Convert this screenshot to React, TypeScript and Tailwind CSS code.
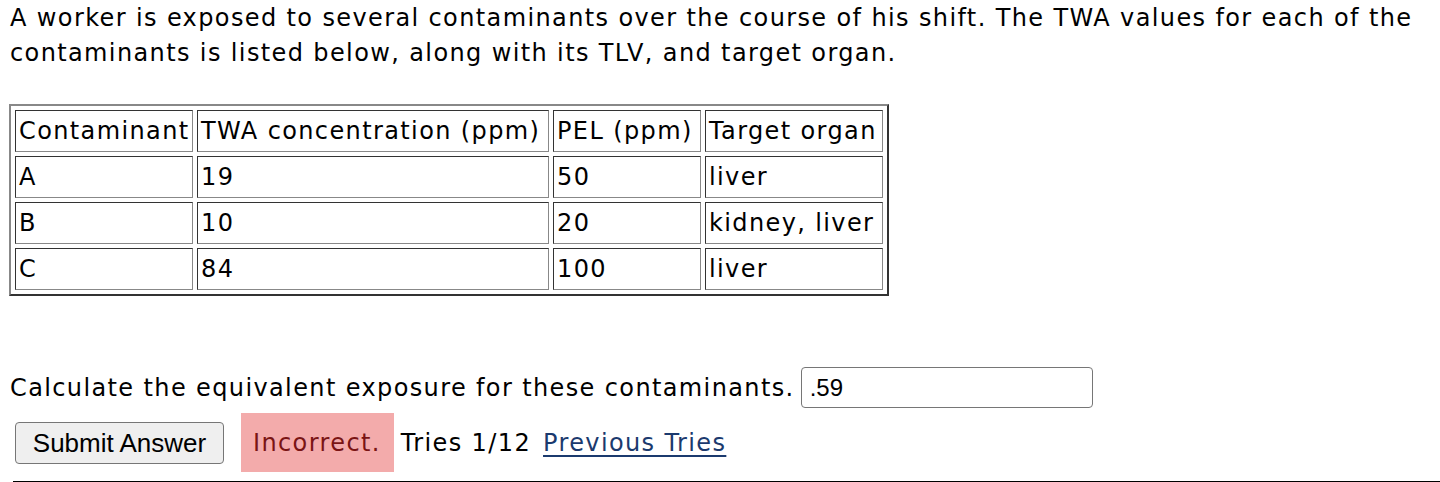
const rows = [
  { name: 'A', twa: '19', pel: '50', organ: 'liver' },
  { name: 'B', twa: '10', pel: '20', organ: 'kidney, liver' },
  { name: 'C', twa: '84', pel: '100', organ: 'liver' },
];

const cell =
  'h-[42px] p-0 pl-[3px] align-middle text-left font-normal border border-t-[#333] border-l-[#333] border-b-[#888] border-r-[#888] whitespace-nowrap';

export default function App() {
  return (
    <div className="bg-white min-h-screen text-black font-['DejaVu_Sans',Verdana,sans-serif] text-[24px] tracking-[1.38px]">
      <div className="pl-[10px] pt-[1px]">
        <p className="leading-[35px] pr-[6px]">
          A worker is exposed to several contaminants over the course of his shift. The TWA values for each of the
          contaminants is listed below, along with its TLV, and target organ.
        </p>

        {/* table */}
        <table className="mt-[33px] -ml-[1px] border-separate border-spacing-[4px] border-2 border-t-[#888] border-l-[#888] border-b-[#333] border-r-[#333]">
          <thead>
            <tr>
              <th className={`${cell} w-[178px]`}>Contaminant</th>
              <th className={`${cell} w-[352px]`}>TWA concentration (ppm)</th>
              <th className={`${cell} w-[148px]`}>PEL (ppm)</th>
              <th className={`${cell} w-[178px]`}>Target organ</th>
            </tr>
          </thead>
          <tbody>
            {rows.map((r) => (
              <tr key={r.name}>
                <td className={cell}>{r.name}</td>
                <td className={cell}>{r.twa}</td>
                <td className={cell}>{r.pel}</td>
                <td className={cell}>{r.organ}</td>
              </tr>
            ))}
          </tbody>
        </table>

        <div className="mt-[71px] flex items-center h-[41px]">
          <span>Calculate the equivalent exposure for these contaminants.</span>
          <div className="ml-[6px] w-[292px] h-[41px] border border-[#767676] rounded-[4px] flex items-center pl-[8px] font-['Liberation_Sans',Arial,sans-serif] text-[24px] tracking-normal">
            .59
          </div>
        </div>

        <div className="mt-[5px] flex items-center h-[59px]">
          <button className="ml-[5px] w-[209px] h-[42px] bg-[#efefef] border border-[#767676] rounded-[4px] font-['Liberation_Sans',Arial,sans-serif] text-[26px] leading-none tracking-normal">
            Submit Answer
          </button>
          <div className="ml-[17px] h-[59px] pl-[12px] pr-[13px] bg-[#f3abab] text-[#7a1414] flex items-center">Incorrect.</div>
          <span className="ml-[7px]">Tries 1/12</span>
          <a href="#" className="ml-[12px] text-[#1b3a6e] underline underline-offset-[4px]">
            Previous Tries
          </a>
        </div>
      </div>
      <div className="ml-[13px] mt-[9px] border-t border-black" />
    </div>
  );
}
